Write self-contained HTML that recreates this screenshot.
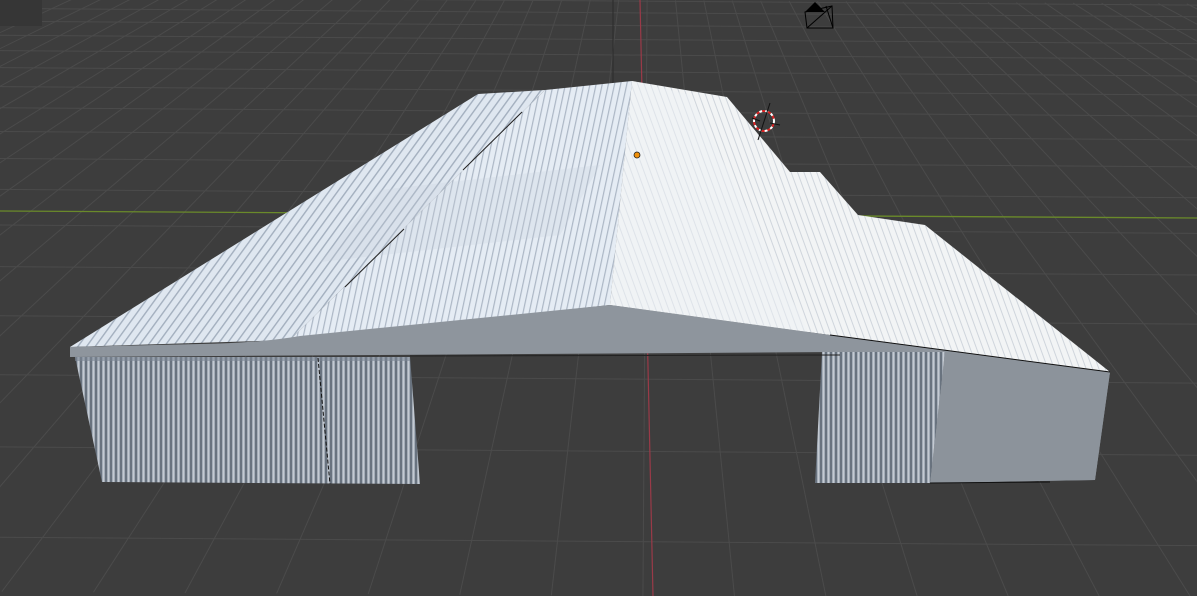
<!DOCTYPE html>
<html><head><meta charset="utf-8"><style>
html,body{margin:0;padding:0;background:#3d3d3d;width:1197px;height:596px;overflow:hidden}
svg{display:block;overflow:hidden}
</style></head><body>
<svg id="s" width="1197" height="596" viewBox="0 0 1197 596" xmlns="http://www.w3.org/2000/svg">
<defs>
<pattern id="corr" width="5" height="10" patternUnits="userSpaceOnUse">
<rect width="5" height="10" fill="#a4adb8"/>
<rect x="0" width="2" height="10" fill="#69737f"/>
<rect x="3" width="1" height="10" fill="#c4cad2"/>
</pattern>
<pattern id="roofL" width="7" height="10" patternUnits="userSpaceOnUse" patternTransform="rotate(36)">
<rect width="7" height="10" fill="#dfe7f0"/>
<rect width="1.4" height="10" fill="#a3afbe"/>
</pattern>
<pattern id="roofC" width="6" height="10" patternUnits="userSpaceOnUse" patternTransform="rotate(12)">
<rect width="6" height="10" fill="#e5ecf4"/>
<rect width="1.2" height="10" fill="#acb7c5"/>
</pattern>
<pattern id="roofR" width="6" height="10" patternUnits="userSpaceOnUse" patternTransform="rotate(-20)">
<rect width="6" height="10" fill="#f2f4f5"/>
<rect width="1" height="10" fill="#cfd5dc"/>
</pattern>
</defs>
<rect width="1197" height="596" fill="#3d3d3d"/>
<g id="grid" stroke="#4b4b4b" stroke-width="1" transform="rotate(0.4 640 300)"></g>
<rect width="42" height="26" fill="#363636"/>
<line x1="0" y1="211" x2="1197" y2="218" stroke="#6a8a2a" stroke-width="1.3"/>
<line x1="640" y1="0" x2="653" y2="596" stroke="#9a3a48" stroke-width="1.2"/>
<line x1="613" y1="0" x2="613" y2="90" stroke="#2a2a2a" stroke-width="1"/>

<polygon points="70,347 478,94 545,90 290,340" fill="url(#roofL)"/>
<polygon points="290,340 545,90 632,81 610,305" fill="url(#roofC)"/>
<polygon points="632,81 727,97 790,172 820,172 858,215 925,225 1110,372 830,335 610,305" fill="url(#roofR)"/>
<polygon points="632,81 690,95 810,335 610,305" fill="#eef2f6" opacity="0.5"/>
<polygon points="380,190 600,165 560,235 320,262" fill="#c8d0da" opacity="0.25"/>
<line x1="463" y1="170" x2="522" y2="112" stroke="#222" stroke-width="1"/>
<line x1="345" y1="287" x2="404" y2="229" stroke="#222" stroke-width="1"/>
<path d="M70,347 L200,344 Q260,343 300,336 L610,305 L830,335 L1110,372 L1095,480 L930,483 L945,352 L840,352 L70,357 Z" fill="#8e959d"/>
<polygon points="945,352 1110,372 1095,480 930,483" fill="#8c939b"/>
<line x1="830" y1="335" x2="1110" y2="372" stroke="#111" stroke-width="1"/>
<polygon points="75,357 410,357 420,484 102,482" fill="url(#corr)"/>
<rect x="75" y="357" width="335" height="4" fill="#7b8592" opacity="0.6"/>
<line x1="318" y1="358" x2="330" y2="484" stroke="#111" stroke-dasharray="4 2" stroke-width="1"/>
<polygon points="822,352 945,352 930,483 815,483" fill="url(#corr)"/>
<line x1="930" y1="483" x2="1050" y2="482" stroke="#111"/>
<line x1="410" y1="356" x2="840" y2="355" stroke="#222" stroke-width="1"/>
<circle cx="637" cy="155" r="3" fill="#f0900a" stroke="#222" stroke-width="0.8"/>
<circle cx="764" cy="121" r="10" fill="none" stroke="#fff" stroke-width="2" stroke-dasharray="3 3"/>
<circle cx="764" cy="121" r="10" fill="none" stroke="#d22" stroke-width="2" stroke-dasharray="3 3" stroke-dashoffset="3"/>
<line x1="770" y1="103" x2="758" y2="140" stroke="#111" stroke-width="1"/>
<line x1="752" y1="118" x2="760" y2="121" stroke="#111"/>
<line x1="770" y1="123" x2="780" y2="125" stroke="#111"/>
<g stroke="#000" fill="none" stroke-width="1">
<polygon points="805,12 832,6 833,28 807,28"/>
<line x1="807" y1="28" x2="832" y2="6"/>
<line x1="826" y1="6" x2="833" y2="28"/>
</g>
<polygon points="805,12 815,2 825,12" fill="#000"/>
</svg>
<script>
var g=document.getElementById('grid'),h='';
var yh=-268,vx=645,s=0.106;
for(var n=0;n<40;n++){var u=0.00108+n*0.000155;var y=yh+1/u;if(y<0)break;h+='<line x1="-20" y1="'+y.toFixed(1)+'" x2="1220" y2="'+y.toFixed(1)+'"/>';}
for(var i=-30;i<=30;i++){var x1=vx+i*s*(0-yh),x2=vx+i*s*(596-yh);h+='<line x1="'+x1.toFixed(1)+'" y1="0" x2="'+x2.toFixed(1)+'" y2="596"/>';}
g.innerHTML=h;
</script>
</body></html>
